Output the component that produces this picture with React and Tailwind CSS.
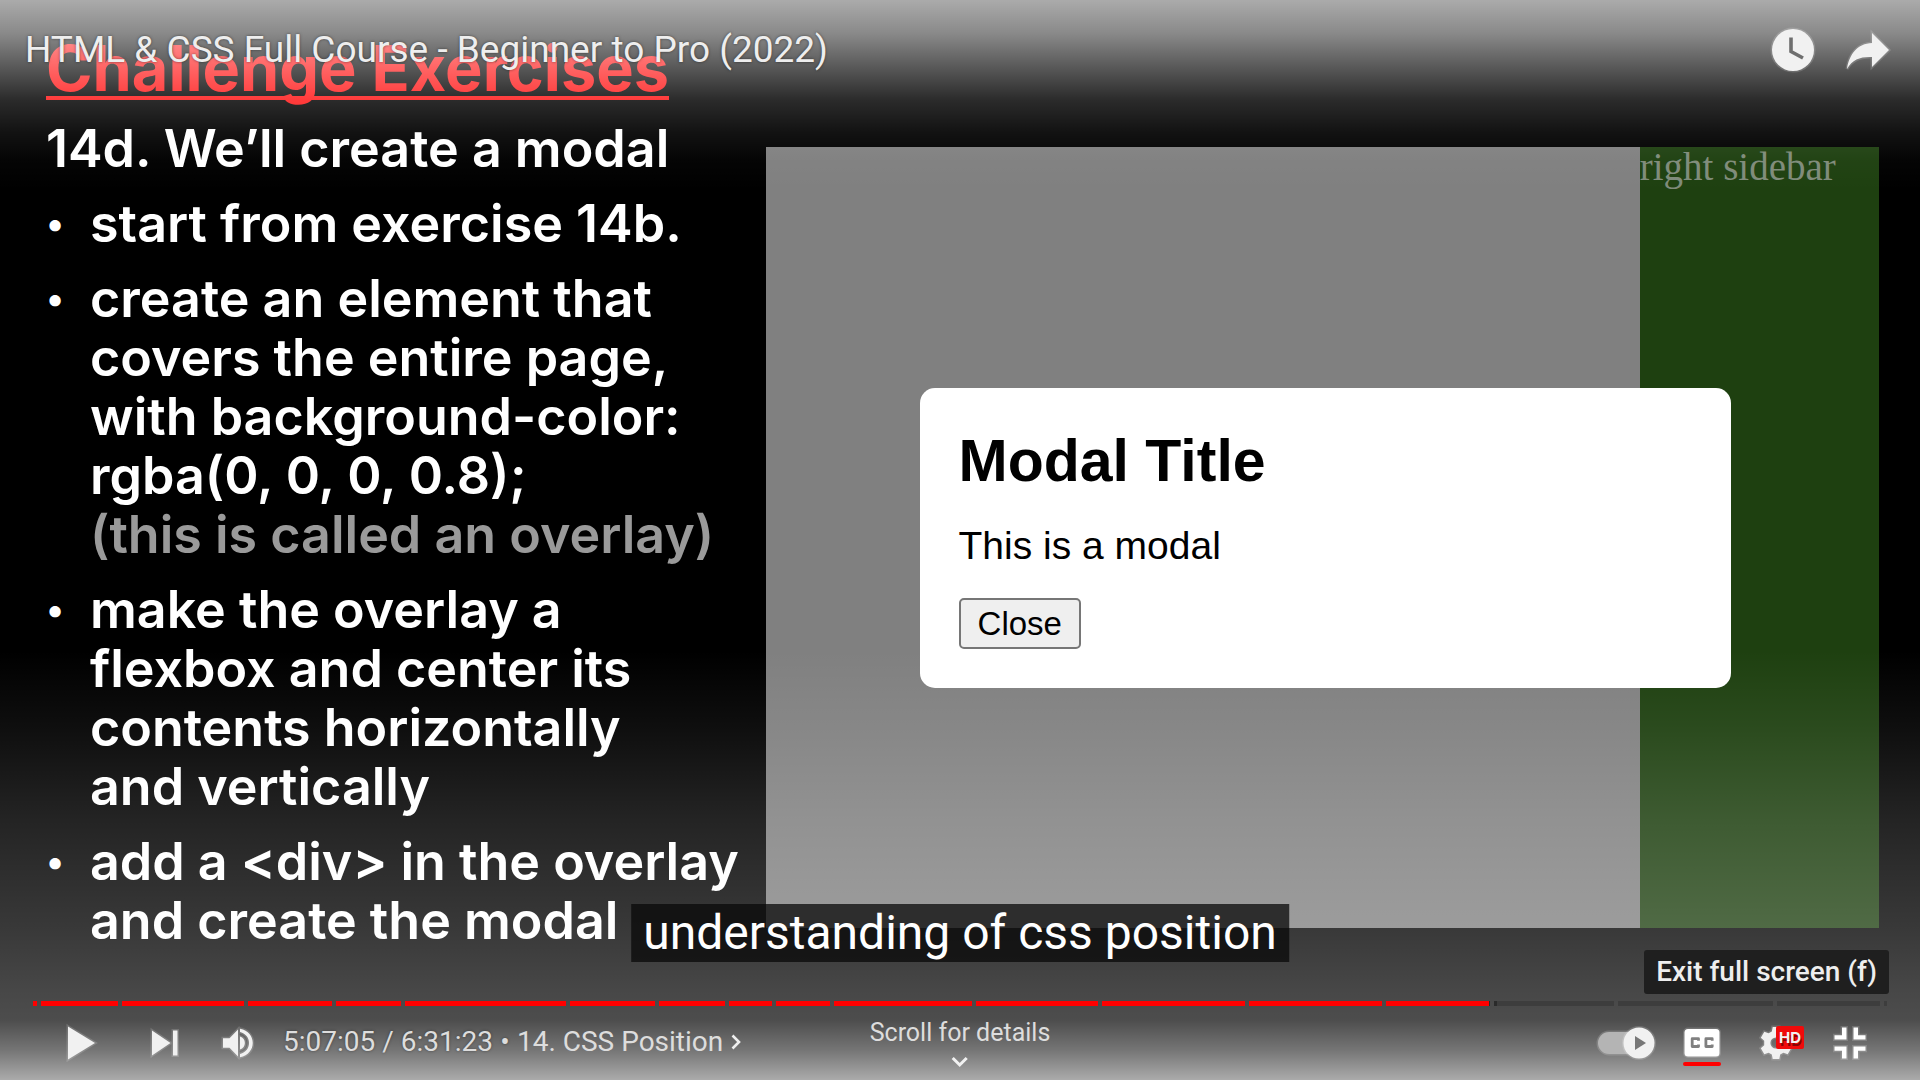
const chapters = [
  { length: 4, played: 1 },
  { length: 77, played: 1 },
  { length: 122, played: 1 },
  { length: 84, played: 1 },
  { length: 65, played: 1 },
  { length: 160, played: 1 },
  { length: 85, played: 1 },
  { length: 66, played: 1 },
  { length: 43, played: 1 },
  { length: 54, played: 1 },
  { length: 138, played: 1 },
  { length: 122, played: 1 },
  { length: 143, played: 1 },
  { length: 133, played: 1 },
  { length: 103, played: 0.99, loaded: 1 },
  { length: 120, played: 0, loaded: 0.03 },
  { length: 155, played: 0 },
  { length: 103, played: 0 },
  { length: 3, played: 0 },
];

const steps = [
  ["start from exercise 14b."],
  ["create an element that", "covers the entire page,", "with background-color:", "rgba(0, 0, 0, 0.8);", "(this is called an overlay)"],
  ["make the overlay a", "flexbox and center its", "contents horizontally", "and vertically"],
  ["add a <div> in the overlay", "and create the modal"],
];

const halo = { stroke: "rgba(255,255,255,0.16)", strokeWidth: 3, paintOrder: "stroke" };

function WatchLaterIcon() {
  return (
    <svg width="48" height="48" viewBox="0 0 48 48" aria-hidden="true">
      <circle cx="24" cy="24" r="21" fill="#f1f1f1" {...halo} />
      <path d="M22 11.5V25.5L34 32" fill="none" stroke="#6e6e6e" strokeWidth="3.6" />
    </svg>
  );
}

function ShareIcon() {
  return (
    <svg width="48" height="48" viewBox="0 0 48 48" aria-hidden="true">
      <path d="M28 7L45 24L28 41V31C17 30.5 8.500 33 3 43C5 28.500 13.500 17.500 28 17Z" fill="#f1f1f1" {...halo} />
    </svg>
  );
}

function PlayIcon() {
  return (
    <svg width="40" height="40" viewBox="0 0 40 40" aria-hidden="true">
      <path d="M7 3.500L34 20L7 36.500Z" fill="#f1f1f1" {...halo} />
    </svg>
  );
}

function NextIcon() {
  return (
    <svg width="40" height="40" viewBox="0 0 40 40" aria-hidden="true">
      <path d="M7 7.500L25.500 20L7 32.500ZM28 7.500H32.500V32.500H28Z" fill="#f1f1f1" {...halo} />
    </svg>
  );
}

function VolumeIcon() {
  return (
    <svg width="40" height="40" viewBox="0 0 40 40" aria-hidden="true">
      <path
        d="M6 15.200H12.500L21 6.500V33.500L12.500 24.800H6ZM23 13.600C29.500 15.200 29.500 24.800 23 26.400ZM23 5.800C40 9 40 31 23 34.200V31C35 28 35 12 23 9Z"
        fill="#f1f1f1"
        {...halo}
      />
    </svg>
  );
}

function AutoplayIcon() {
  return (
    <svg width="60" height="40" viewBox="0 0 60 40" aria-hidden="true">
      <rect x="2" y="9" width="48" height="22" rx="11" fill="#b4b4b4" {...halo} />
      <circle cx="43" cy="20" r="15.500" fill="#f1f1f1" {...halo} />
      <path d="M39 13L50 20L39 27Z" fill="#777" />
    </svg>
  );
}

function CaptionsIcon() {
  return (
    <svg width="40" height="40" viewBox="0 0 40 40" aria-hidden="true">
      <rect x="2.500" y="6" width="35" height="27.500" rx="3.500" fill="#fff" {...halo} />
      <path d="M16.500 17.700V15.700H10.200V23.500H16.500V21.500M30.200 17.700V15.700H23.900V23.500H30.200V21.500" fill="none" stroke="#808080" strokeWidth="2.800" strokeLinejoin="round" />
    </svg>
  );
}

function GearIcon() {
  return (
    <svg width="40" height="40" viewBox="-20 -20 40 40" aria-hidden="true">
      <path
        d="M-3.300 -16H3.300L4.200 -11.600L7.400 -9.700L11.700 -11.200L15.200 -5.300L11.800 -2.300V2.300L15.200 5.300L11.700 11.200L7.400 9.700L4.200 11.600L3.300 16H-3.300L-4.200 11.600L-7.400 9.700L-11.700 11.200L-15.200 5.300L-11.800 2.300V-2.300L-15.200 -5.300L-11.700 -11.200L-7.400 -9.700L-4.200 -11.600ZM0 -5.600A5.600 5.600 0 1 0 0 5.600A5.600 5.600 0 1 0 0 -5.600Z"
        fillRule="evenodd"
        fill="#f1f1f1"
        {...halo}
      />
    </svg>
  );
}

function ExitFullscreenIcon() {
  return (
    <svg width="40" height="40" viewBox="0 0 40 40" aria-hidden="true">
      <path
        d="M12 4.500H16.500V16.500H4.500V12.300H12ZM23.500 4.500H28V12.300H35.500V16.500H23.500ZM4.500 23.500H16.500V35.500H12V27.700H4.500ZM23.500 23.500H35.500V27.700H28V35.500H23.500Z"
        fill="#fff"
        {...halo}
      />
    </svg>
  );
}

function PlayerButton({ label, className = "w-[74px]", children }) {
  return (
    <button type="button" aria-label={label} className={`relative flex h-[66px] shrink-0 items-center justify-center ${className}`}>
      {children}
    </button>
  );
}

function Slide() {
  return (
    <section className="flex items-start">
      <div className="w-[39.9%] shrink-0 pt-[28px] pl-[46px] font-['Inter',sans-serif] whitespace-nowrap text-white">
        <h1 className="text-[63px] leading-[80px] font-bold text-[#ff1414] underline decoration-4 underline-offset-[5px] [text-decoration-skip-ink:none]">
          Challenge Exercises
        </h1>
        <div className="mt-[11px] flex flex-col gap-4 text-[52px] leading-[59px] font-semibold">
          <p>14d. We’ll create a modal</p>
          <ul className="flex flex-col gap-4">
            {steps.map((lines) => (
              <li key={lines[0]} className="flex">
                <span className="w-[44px] shrink-0 text-[36px]" aria-hidden="true">•</span>
                <p>
                  {lines.map((line) => (
                    <span key={line} className={line.startsWith("(") ? "block text-[#9a9a9a]" : "block"}>
                      {line}
                    </span>
                  ))}
                </p>
              </li>
            ))}
          </ul>
        </div>
      </div>
      <div className="relative mt-[147px] mr-[41px] flex aspect-[1113/781] flex-1 items-center justify-center bg-[#808080] pt-[2px] pl-[5px]">
        <aside className="absolute inset-y-0 right-0 w-[21.5%] bg-[#1e4010] font-['Liberation_Serif',serif] text-[39px] leading-[40px] text-[#7f8b7a]">
          right sidebar
        </aside>
        <div className="relative w-[73.2%] rounded-[15px] bg-white px-[39px] pt-[41px] pb-[39px] font-['Liberation_Sans',sans-serif] text-black">
          <h2 className="text-[59px] leading-[64px] font-bold">Modal Title</h2>
          <p className="mt-[31px] text-[39px] leading-[44px]">This is a modal</p>
          <button type="button" className="mt-[30px] block rounded-[5px] border-2 border-[#767676] bg-[#efefef] px-[17px] text-[33px] leading-[47px]">
            Close
          </button>
        </div>
      </div>
    </section>
  );
}

function ProgressBar() {
  return (
    <div className="relative mx-[33px]">
      <div className="flex h-[5px] gap-1">
        {chapters.map((chapter, i) => (
          <div key={i} className="relative h-full bg-[#3d3d3d]" style={{ flex: `${chapter.length} 1 0px` }}>
            <div className="absolute inset-y-0 left-0 bg-[#2a2a2a]" style={{ width: `${(chapter.loaded || 0) * 100}%` }} />
            <div className="absolute inset-y-0 left-0 bg-[#ff0000]" style={{ width: `${chapter.played * 100}%` }} />
          </div>
        ))}
      </div>
      <input type="range" aria-label="Seek" min="0" max="23483" defaultValue="18425" className="absolute inset-0 h-full w-full cursor-pointer opacity-0" />
    </div>
  );
}

function Controls() {
  return (
    <div className="relative flex items-center pr-[33px] pl-[45px] text-[28px] leading-[36px] text-[#dddddd]">
      <PlayerButton label="Play" className="w-[72px]"><PlayIcon /></PlayerButton>
      <PlayerButton label="Next" className="ml-3 w-[72px]"><NextIcon /></PlayerButton>
      <PlayerButton label="Mute" className="w-[72px]"><VolumeIcon /></PlayerButton>
      <div className="ml-[10px] flex items-center pb-0.5 whitespace-pre [text-shadow:0_0_3px_rgba(0,0,0,0.4)]">
        <span>5:07:05 / 6:31:23</span>
        <span className="w-[24px] text-center">•</span>
        <button type="button" className="flex items-center gap-2">
          14. CSS Position
          <svg width="10" height="16" viewBox="0 0 10 16" aria-hidden="true">
            <path d="M1.500 1.500L8 8L1.500 14.500" fill="none" stroke="#eee" strokeWidth="2.600" />
          </svg>
        </button>
      </div>
      <div className="ml-auto flex">
        <PlayerButton label="Autoplay is on" className="w-[78px]"><AutoplayIcon /></PlayerButton>
        <PlayerButton label="Subtitles/closed captions">
          <CaptionsIcon />
          <span className="absolute bottom-[10px] h-1 w-[38px] rounded-sm bg-[#ff0000]" />
        </PlayerButton>
        <PlayerButton label="Settings">
          <GearIcon />
          <span className="absolute top-4 left-[37px] rounded-xs bg-[#f00a0a] px-[3px] font-['Inter',sans-serif] text-[15px] leading-[23px] font-bold text-[#f1f1f1] [text-shadow:1px_3px_0_rgba(90,0,0,0.7)]">
            HD
          </span>
        </PlayerButton>
        <PlayerButton label="Exit full screen"><ExitFullscreenIcon /></PlayerButton>
      </div>
      <button type="button" className="absolute top-[8px] left-1/2 flex -translate-x-1/2 flex-col items-center gap-2 text-[25px] leading-[30px] whitespace-nowrap">
        Scroll for details
        <svg width="18" height="12" viewBox="0 0 18 12" aria-hidden="true">
          <path d="M2 2L9 9L16 2" fill="none" stroke="#f1f1f1" strokeWidth="3" />
        </svg>
      </button>
    </div>
  );
}

export default function App() {
  return (
    <main className="relative min-h-screen overflow-hidden bg-black font-['Roboto',sans-serif]">
      <Slide />
      <div className="pointer-events-none absolute inset-x-0 top-0 h-[190px] bg-[linear-gradient(to_bottom,rgba(255,255,255,0.67)_0px,rgba(255,255,255,0.54)_33px,rgba(255,255,255,0.35)_67px,rgba(255,255,255,0.17)_100px,rgba(255,255,255,0.07)_133px,rgba(255,255,255,0.02)_160px,rgba(255,255,255,0)_190px)]" />
      <div className="pointer-events-none absolute inset-x-0 bottom-0 h-[430px] bg-[linear-gradient(to_top,rgba(255,255,255,0.67)_0px,rgba(255,255,255,0.46)_30px,rgba(255,255,255,0.3)_60px,rgba(255,255,255,0.28)_90px,rgba(255,255,255,0.22)_155px,rgba(255,255,255,0.14)_260px,rgba(255,255,255,0.06)_350px,rgba(255,255,255,0)_430px)]" />

      <header className="absolute inset-x-0 top-0 flex items-start justify-between pt-[26px] pr-[28px] pl-[25px]">
        <a href="#video" className="text-[37px] leading-[48px] text-[#eeeeee] [text-shadow:0_0_3px_rgba(0,0,0,0.5)]">
          HTML &amp; CSS Full Course - Beginner to Pro (2022)
        </a>
        <div className="flex gap-[27px]">
          <button type="button" aria-label="Watch later"><WatchLaterIcon /></button>
          <button type="button" aria-label="Share"><ShareIcon /></button>
        </div>
      </header>

      <p className="absolute bottom-[118px] left-1/2 -translate-x-1/2 bg-[rgba(8,8,8,0.75)] px-3 text-[48px] leading-[58px] whitespace-nowrap text-white">
        understanding of css position
      </p>

      <div role="tooltip" className="absolute right-[31px] bottom-[86px] rounded-[3px] bg-[#1f1f1f] px-3 text-[28px] leading-[44px] font-medium text-[#eeeeee]">
        Exit full screen (f)
      </div>

      <footer className="absolute inset-x-0 bottom-0 pb-1">
        <ProgressBar />
        <div className="pt-1">
          <Controls />
        </div>
      </footer>
    </main>
  );
}
